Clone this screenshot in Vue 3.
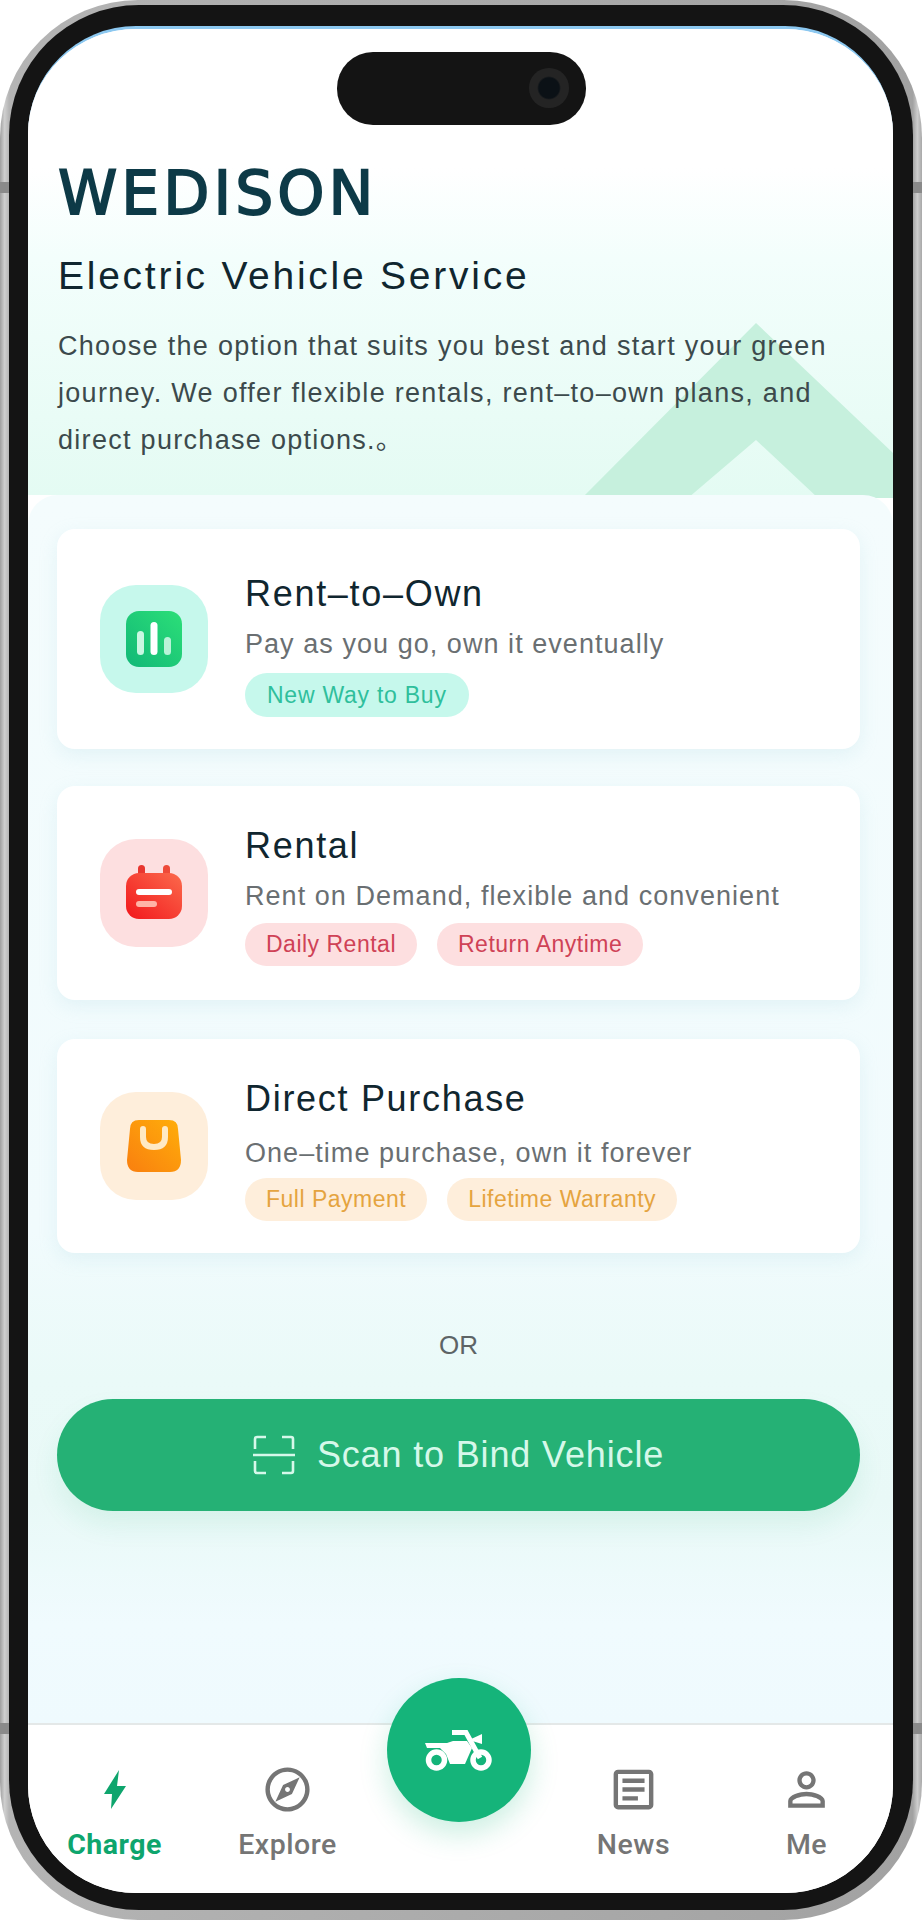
<script setup>
const services = [
  {
    key: 'own',
    title: 'Rent–to–Own',
    sub: 'Pay as you go, own it eventually',
    tags: ['New Way to Buy'],
  },
  {
    key: 'rent',
    title: 'Rental',
    sub: 'Rent on Demand, flexible and convenient',
    tags: ['Daily Rental', 'Return Anytime'],
  },
  {
    key: 'buy',
    title: 'Direct Purchase',
    sub: 'One–time purchase, own it forever',
    tags: ['Full Payment', 'Lifetime Warranty'],
  },
]
</script>

<template>
  <div class="phone">
    <span class="notch notch--lt"></span>
    <span class="notch notch--rt"></span>
    <span class="notch notch--lb"></span>
    <span class="notch notch--rb"></span>
    <div class="bezel">
      <div class="screen">
        <div class="island"><span class="lens"></span></div>

        <header class="hero">
          <svg class="hero__house" viewBox="0 0 311 175" aria-hidden="true">
            <path d="M174 0 L311 130 L311 175 L236 175 L174 117 L106 175 L0 175 Z" fill="#c6f0dd" />
          </svg>
          <div class="logo">WEDISON</div>
          <h1 class="hero__title">Electric Vehicle Service</h1>
          <p class="hero__text">
            Choose the option that suits you best and start your green journey. We offer flexible rentals, rent–to–own plans, and direct purchase options.。
          </p>
        </header>

        <main class="panel">
          <section v-for="s in services" :key="s.key" class="card" :class="`card--${s.key}`">
            <div class="card__tile">
              <svg v-if="s.key === 'own'" viewBox="0 0 56 56" width="56" height="56">
                <defs>
                  <linearGradient id="g-own" x1="0" y1="1" x2="1" y2="0">
                    <stop offset="0" stop-color="#12b877" />
                    <stop offset="1" stop-color="#2cdf78" />
                  </linearGradient>
                </defs>
                <rect width="56" height="56" rx="13" fill="url(#g-own)" />
                <rect x="11" y="20" width="7" height="24" rx="3.5" fill="#c9f7e2" />
                <rect x="24.5" y="11" width="7" height="33" rx="3.5" fill="#fff" />
                <rect x="38" y="26" width="7" height="18" rx="3.5" fill="#b9f3d8" />
              </svg>
              <svg v-else-if="s.key === 'rent'" viewBox="0 0 56 56" width="56" height="56">
                <defs>
                  <linearGradient id="g-rent" x1="0" y1="1" x2="1" y2="0">
                    <stop offset="0" stop-color="#f2171c" />
                    <stop offset="1" stop-color="#fb6a4c" />
                  </linearGradient>
                </defs>
                <rect x="12" y="0" width="7" height="16" rx="3.5" fill="#e8362f" />
                <rect x="37" y="0" width="7" height="16" rx="3.5" fill="#ee4a39" />
                <rect y="8" width="56" height="46" rx="13" fill="url(#g-rent)" />
                <rect x="10" y="24" width="36" height="6" rx="3" fill="#fff" />
                <rect x="10" y="36" width="21" height="6" rx="3" fill="#ffb3a6" />
              </svg>
              <svg v-else viewBox="0 0 56 56" width="56" height="56">
                <defs>
                  <linearGradient id="g-buy" x1="0" y1="1" x2="1" y2="0">
                    <stop offset="0" stop-color="#f97f0f" />
                    <stop offset="1" stop-color="#ffae0a" />
                  </linearGradient>
                </defs>
                <path d="M4 11 Q4 2 13 2 H43 Q52 2 52 11 L55 42 Q55 54 44 54 H12 Q1 54 1 42 Z" fill="url(#g-buy)" />
                <path d="M17 11 V19 Q17 29 28 29 Q39 29 39 19 V11" fill="none" stroke="#ffe9c4" stroke-width="6" stroke-linecap="round" />
              </svg>
            </div>
            <div class="card__body">
              <h2 class="card__title">{{ s.title }}</h2>
              <p class="card__sub">{{ s.sub }}</p>
              <div class="card__tags">
                <span v-for="t in s.tags" :key="t" class="tag">{{ t }}</span>
              </div>
            </div>
          </section>

          <div class="or">OR</div>

          <button class="scan" type="button">
            <svg class="scan__icon" viewBox="0 0 42 40" width="42" height="40" fill="none" stroke="#d6f8ea" stroke-width="2.6">
              <path d="M2 14 V4 Q2 2 4 2 H13" />
              <path d="M29 2 H38 Q40 2 40 4 V14" />
              <path d="M0 20 H42" />
              <path d="M2 26 V36 Q2 38 4 38 H13" />
              <path d="M29 38 H38 Q40 38 40 36 V26" />
            </svg>
            <span>Scan to Bind Vehicle</span>
          </button>
        </main>

        <nav class="tabs">
          <a class="tab tab--on">
            <span class="tab__icon">
              <svg viewBox="0 0 22 39" width="22" height="39"><path d="M15 0 L0 24 H8 L7 39 L22 16 H13 Z" fill="#0ea56d" /></svg>
            </span>
            <span class="tab__label">Charge</span>
          </a>
          <a class="tab">
            <span class="tab__icon">
              <svg viewBox="0 0 24 24" width="53" height="53"><path d="M12 2C6.48 2 2 6.48 2 12s4.48 10 10 10 10-4.48 10-10S17.52 2 12 2zm0 18c-4.41 0-8-3.59-8-8s3.59-8 8-8 8 3.59 8 8-3.59 8-8 8zm-5.5-2.5l7.51-3.49L17.5 6.5 9.99 9.99 6.5 17.5zm5.5-6.6c.61 0 1.1.49 1.1 1.1s-.49 1.1-1.1 1.1-1.1-.49-1.1-1.1.49-1.1 1.1-1.1z" fill="#757575" /></svg>
            </span>
            <span class="tab__label">Explore</span>
          </a>
          <span class="tab tab--gap"></span>
          <a class="tab">
            <span class="tab__icon">
              <svg viewBox="0 0 24 24" width="53" height="53"><path d="M19 5v14H5V5h14m0-2H5c-1.1 0-2 .9-2 2v14c0 1.1.9 2 2 2h14c1.1 0 2-.9 2-2V5c0-1.1-.9-2-2-2zM14 17H7v-2h7v2zm3-4H7v-2h10v2zm0-4H7V7h10v2z" fill="#757575" /></svg>
            </span>
            <span class="tab__label">News</span>
          </a>
          <a class="tab">
            <span class="tab__icon">
              <svg viewBox="0 0 24 24" width="55" height="55"><path d="M12 5.9c1.16 0 2.1.94 2.1 2.1s-.94 2.1-2.1 2.1S9.9 9.16 9.9 8s.94-2.1 2.1-2.1m0 9c2.97 0 6.1 1.46 6.1 2.1v1.1H5.9V17c0-.64 3.13-2.1 6.1-2.1M12 4C9.79 4 8 5.79 8 8s1.79 4 4 4 4-1.79 4-4-1.79-4-4-4zm0 9c-2.67 0-8 1.34-8 4v3h16v-3c0-2.66-5.33-4-8-4z" fill="#757575" /></svg>
            </span>
            <span class="tab__label">Me</span>
          </a>
          <div class="fab">
            <svg viewBox="0 0 68 41" width="68" height="41" fill="#fff">
              <path d="M0 13 H22 L28 11 H42 L47 18 L40 34 H25 L21 24 L15 18 H2 Z" />
              <circle cx="11.5" cy="30" r="8" fill="none" stroke="#fff" stroke-width="5.5" />
              <circle cx="56" cy="30" r="8" fill="none" stroke="#fff" stroke-width="5.5" />
              <path d="M27 2.5 H41 L55 28" fill="none" stroke="#fff" stroke-width="5" />
              <path d="M44 10 L57 4 V14 Z" />
            </svg>
          </div>
        </nav>
      </div>
    </div>
  </div>
</template>

<style>
html, body { background: #fff; }
</style>

<style scoped>
.phone {
  position: relative;
  width: 922px;
  height: 1920px;
  box-sizing: border-box;
  padding: 5px 9px 10px 9px;
  border-radius: 138px;
  background: linear-gradient(90deg, #9f9f9f, #cfcfcf 0.5%, #b4b4b4 1%, #a2a2a2 99%, #cdcdcd 99.5%, #a8a8a8);
  font-family: "Liberation Sans", "Noto Sans CJK SC", sans-serif;
  overflow: hidden;
}

.notch {
  position: absolute;
  width: 9px;
  height: 11px;
  background: #8a8a8a;
}

.notch--lt { left: 0; top: 182px; }
.notch--rt { right: 0; top: 182px; }
.notch--lb { left: 0; top: 1723px; }
.notch--rb { right: 0; top: 1723px; }

.bezel {
  height: 100%;
  box-sizing: border-box;
  padding: 21px 20px 17px 19px;
  border-radius: 130px;
  background: #141414;
}

.screen {
  position: relative;
  height: 100%;
  display: flex;
  flex-direction: column;
  border-radius: 108px;
  overflow: hidden;
  background: #fff;
  border-top: 3px solid #8cc8f0;
  box-sizing: border-box;
}

.island {
  position: absolute;
  z-index: 2;
  top: 23px;
  left: 309px;
  width: 249px;
  height: 73px;
  border-radius: 36px;
  background: #141414;
}

.lens {
  position: absolute;
  top: 16px;
  right: 17px;
  width: 40px;
  height: 40px;
  border-radius: 50%;
  background: radial-gradient(circle, #0b1116 0 36%, #242424 42% 100%);
}

.hero {
  position: relative;
  height: 466px;
  box-sizing: border-box;
  padding: 140px 32px 0 30px;
  background: linear-gradient(180deg, #fff 0, #fff 138px, #f3fefc 230px, #e4fbf3 466px);
}

.hero__house {
  position: absolute;
  right: 0;
  bottom: -3px;
  width: 311px;
  height: 175px;
}

.logo {
  position: relative;
  height: 48px;
  line-height: 48px;
  font-family: "DejaVu Sans", "Liberation Sans", sans-serif;
  font-size: 60px;
  font-weight: 400;
  letter-spacing: 4px;
  -webkit-text-stroke: 1.8px #0d3a47;
  color: #0d3a47;
}

.hero__title {
  position: relative;
  margin: 36px 0 0;
  font-size: 39px;
  line-height: 46px;
  font-weight: 400;
  letter-spacing: 2.75px;
  color: #10262f;
}

.hero__text {
  position: relative;
  margin: 24px 0 0;
  width: 800px;
  font-size: 27px;
  line-height: 47px;
  letter-spacing: 1.3px;
  color: #3c4a4c;
}

.panel {
  position: relative;
  flex: 1;
  box-sizing: border-box;
  padding: 34px 33px 0 29px;
  border-radius: 30px 30px 0 0;
  background: linear-gradient(180deg, #f4fcfd 0, #f1fbfd 60%, #eafaf8 72%, #e9f9f7 82%, #f0fbfe 92%, #effafe 100%);
}

.card {
  display: flex;
  align-items: center;
  height: 214px;
  margin-bottom: 39px;
  padding-left: 43px;
  box-sizing: border-box;
  border-radius: 18px;
  background: #fff;
  box-shadow: 0 6px 18px rgba(170, 215, 225, 0.22);
}

.card--own { height: 220px; margin-bottom: 37px; }

.card__tile {
  flex: none;
  width: 108px;
  height: 108px;
  display: flex;
  align-items: center;
  justify-content: center;
  border-radius: 36px;
  margin-right: 37px;
}

.card--own .card__tile { background: #c6f8ec; }
.card--rent .card__tile { background: #fddfe0; }
.card--buy .card__tile { background: #feeedb; }

.card__body {
  align-self: flex-start;
  padding-top: 38px;
}

.card--own .card__body { padding-top: 43px; }

.card__title {
  margin: 0;
  font-size: 36px;
  line-height: 44px;
  font-weight: 400;
  letter-spacing: 1.7px;
  color: #10262f;
}

.card__sub {
  margin: 3px 0 0;
  font-size: 27px;
  line-height: 50px;
  letter-spacing: 1.05px;
  color: #6a6f72;
}

.card--buy .card__sub { margin-top: 7px; }

.card__tags {
  display: flex;
  gap: 20px;
  margin-top: 4px;
}

.card--rent .card__tags { margin-top: 2px; }
.card--buy .card__tags { margin-top: 0; }

.tag {
  height: 43px;
  line-height: 43px;
  padding: 0 21px;
  border-radius: 22px;
  font-size: 23px;
  letter-spacing: 0.5px;
}

.card--own .tag { background: #c6f8ec; color: #2fbf9c; height: 44px; line-height: 44px; letter-spacing: 0.75px; padding: 0 22px; }
.card--rent .tag { background: #fddfe0; color: #cf4256; }
.card--buy .tag { background: #feeedb; color: #e5a43f; }

.or {
  margin-top: 77px;
  text-align: center;
  font-size: 26px;
  line-height: 30px;
  color: #5d6466;
}

.scan {
  display: flex;
  align-items: center;
  justify-content: center;
  gap: 22px;
  width: 100%;
  height: 112px;
  margin-top: 39px;
  border: 0;
  border-radius: 56px;
  background: #25b175;
  color: #d6f8ea;
  font-family: inherit;
  font-size: 36px;
  letter-spacing: 0.85px;
  box-shadow: 0 14px 26px rgba(37, 177, 117, 0.1);
}

.tabs {
  position: relative;
  display: grid;
  grid-template-columns: repeat(5, 1fr);
  flex: none;
  height: 170px;
  box-sizing: border-box;
  padding-top: 38px;
  background: #fff;
  border-top: 2px solid #e4e8e8;
}

.tab {
  display: flex;
  flex-direction: column;
  align-items: center;
  color: #757575;
}

.tab__icon {
  height: 53px;
  display: flex;
  align-items: center;
  justify-content: center;
}

.tab__label {
  margin-top: 12px;
  font-family: "Roboto", sans-serif;
  font-size: 28.5px;
  line-height: 34px;
  font-weight: 500;
  letter-spacing: 0.5px;
}

.tab--on { color: #0ea56d; }
.tab--on .tab__label { font-weight: 700; }

.fab {
  position: absolute;
  top: -47px;
  left: 359px;
  width: 144px;
  height: 144px;
  display: flex;
  align-items: center;
  justify-content: center;
  border-radius: 50%;
  background: #15b47a;
  box-shadow: 0 12px 28px rgba(21, 180, 122, 0.22);
}
</style>
